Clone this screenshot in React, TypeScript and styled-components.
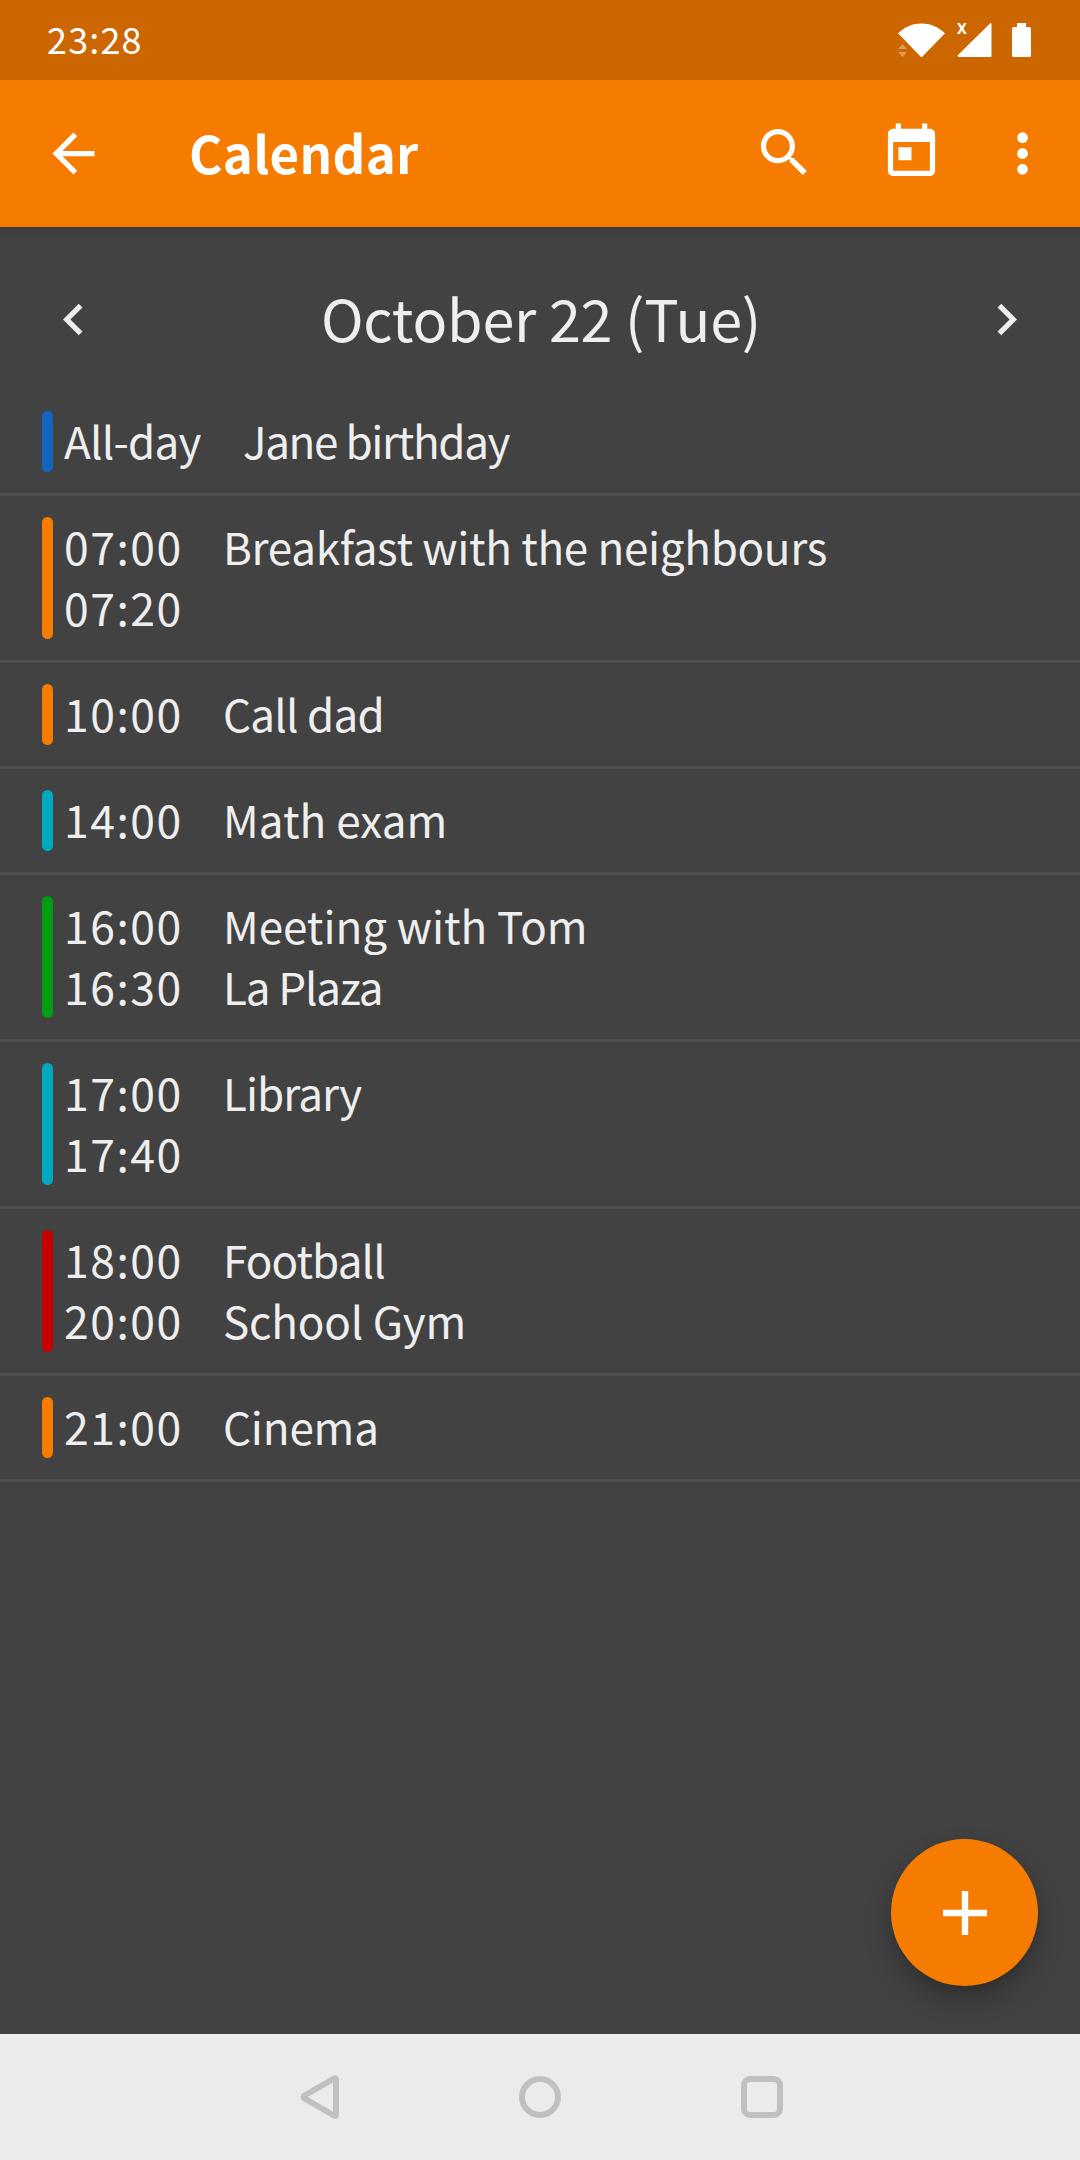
import React from "react";
import styled, { createGlobalStyle } from "styled-components";

const GlobalStyle = createGlobalStyle`
  body {
    margin: 0;
    background: #424242;
    font-family: "Noto Sans CJK SC", "Noto Sans", sans-serif;
    font-weight: 400;
    color: #eeeeee;
  }
`;

const Screen = styled.div`
  position: relative;
  display: flex;
  flex-direction: column;
  width: 1080px;
  height: 2160px;
  overflow: hidden;
  background: #424242;
`;

const StatusBar = styled.div`
  display: flex;
  align-items: center;
  justify-content: space-between;
  flex: none;
  box-sizing: border-box;
  height: 80px;
  padding: 0 49px 0 47px;
  background: #cc6600;
  color: #ffffff;
`;

const Clock = styled.span`
  margin-bottom: 4px;
  font-size: 36px;
  line-height: 48px;
  letter-spacing: 1.15px;
`;

const StatusIcons = styled.div`
  display: flex;
  align-items: center;
`;

const StatusGlyph = styled.svg<{ $before?: number }>`
  display: block;
  margin-left: ${(p) => p.$before ?? 0}px;
  fill: #ffffff;
`;

const Signal = styled.div`
  position: relative;
  margin-left: 12px;
`;

const NoData = styled.span`
  position: absolute;
  left: 0;
  top: -2px;
  font-family: Roboto, sans-serif;
  font-weight: 700;
  font-size: 15.5px;
  line-height: 16px;
`;

const AppBar = styled.header`
  display: flex;
  align-items: center;
  flex: none;
  box-sizing: border-box;
  height: 147px;
  padding: 0 26px 0 42px;
  background: #f57c00;
  color: #ffffff;
`;

const BarShade = styled.div`
  flex: none;
  height: 10px;
  background: linear-gradient(#3b3b3b, #424242);
`;

const Title = styled.h1`
  flex: 1;
  margin: 0 0 3px 84px;
  font-size: 51px;
  font-weight: 700;
  line-height: 70px;
  letter-spacing: 0.3px;
`;

const IconButton = styled.button<{ $before?: number }>`
  flex: none;
  width: 63px;
  height: 63px;
  margin: 0 0 0 ${(p) => p.$before ?? 0}px;
  padding: 0;
  border: 0;
  background: none;
  color: inherit;

  svg {
    display: block;
    width: 63px;
    height: 63px;
    fill: currentColor;
  }
`;

const DayHeader = styled.div`
  display: flex;
  align-items: center;
  justify-content: space-between;
  flex: none;
  box-sizing: border-box;
  height: 153px;
  padding: 11px 42px 0;
`;

const DayTitle = styled.h2`
  margin: 0 0 5px 2px;
  font-size: 57.5px;
  font-weight: 400;
  line-height: 84px;
  letter-spacing: -0.2px;
`;

const EventList = styled.ul`
  flex: 1;
  margin: 0;
  padding: 0;
  list-style: none;
`;

const EventRow = styled.li`
  display: flex;
  padding: 21px 42px;
  border-bottom: 3px solid #505050;
`;

const ColorBar = styled.span<{ $color: string }>`
  flex: none;
  width: 11px;
  margin-right: 11px;
  border-radius: 5.5px;
  background: ${(p) => p.$color};
`;

const Times = styled.div<{ $allDay?: boolean }>`
  flex: none;
  width: ${(p) => (p.$allDay ? 137 : 117)}px;
  margin: ${(p) => (p.$allDay ? "-1px 42px 1px 0" : "-2px 42px 2px 0")};
  white-space: nowrap;
`;

const Details = styled.div`
  margin: -1px 0 1px;
  white-space: nowrap;
`;

const TimeText = styled.div`
  font-size: 44.5px;
  line-height: 61px;
  letter-spacing: 1.5px;
`;

const Label = styled.div<{ $tracking: number }>`
  font-size: 44px;
  line-height: 61px;
  letter-spacing: ${(p) => p.$tracking}px;
`;

const AddButton = styled.button`
  position: absolute;
  right: 42px;
  bottom: 174px;
  display: flex;
  align-items: center;
  justify-content: center;
  width: 147px;
  height: 147px;
  padding: 0;
  border: 0;
  border-radius: 50%;
  background: #f57c00;
  box-shadow: 0 14px 26px rgba(0, 0, 0, 0.25), 0 2px 10px rgba(0, 0, 0, 0.08);
`;

const NavBar = styled.nav`
  display: flex;
  align-items: center;
  justify-content: center;
  gap: 180px;
  flex: none;
  height: 126px;
  background: #ebebeb;

  svg {
    display: block;
    fill: none;
    stroke: #c0c0c0;
    stroke-width: 6;
    stroke-linejoin: round;
  }
`;

const ORANGE = "#f57c00";
const CYAN = "#00a9bf";

type Entry = { text: string; tracking: number };
type CalendarEvent = {
  color: string;
  times?: string[];
  allDay?: boolean;
  details: Entry[];
};

const events: CalendarEvent[] = [
  { color: "#1565c0", allDay: true, details: [{ text: "Jane birthday", tracking: -1.38 }] },
  { color: ORANGE, times: ["07:00", "07:20"], details: [{ text: "Breakfast with the neighbours", tracking: -0.32 }] },
  { color: ORANGE, times: ["10:00"], details: [{ text: "Call dad", tracking: -0.75 }] },
  { color: CYAN, times: ["14:00"], details: [{ text: "Math exam", tracking: 0.05 }] },
  {
    color: "#009c14",
    times: ["16:00", "16:30"],
    details: [
      { text: "Meeting with Tom", tracking: -0.05 },
      { text: "La Plaza", tracking: -1.1 },
    ],
  },
  { color: CYAN, times: ["17:00", "17:40"], details: [{ text: "Library", tracking: -0.97 }] },
  {
    color: "#c80000",
    times: ["18:00", "20:00"],
    details: [
      { text: "Football", tracking: -0.9 },
      { text: "School Gym", tracking: -0.2 },
    ],
  },
  { color: ORANGE, times: ["21:00"], details: [{ text: "Cinema", tracking: -0.2 }] },
];

export default function App() {
  return (
    <>
      <GlobalStyle />
      <Screen>
        <StatusBar>
          <Clock>23:28</Clock>
          <StatusIcons>
            <StatusGlyph width="47" height="34" viewBox="0 0 47 34">
              <path d="M0 10.2C7 3.7 15 .5 23.5 .5S40 3.7 47 10.2L23.5 34.5z" />
              <path d="M0 26l4.5-5L9 26zM0 29h9l-4.5 5z" opacity=".35" />
            </StatusGlyph>
            <Signal>
              <NoData>X</NoData>
              <StatusGlyph width="35" height="34" viewBox="0 0 35 34">
                <path d="M34.5 1v32q0 1-1 1H1.5q-1.5-1-.5-2L33 .5q1.5-1 1.5.5z" />
              </StatusGlyph>
            </Signal>
            <StatusGlyph $before={20} width="19" height="34" viewBox="0 0 19 34">
              <path d="M5 0h9v4h3.5q1.5 0 1.5 1.5v27q0 1.5-1.5 1.5h-16q-1.5 0-1.5-1.5v-27Q0 4 1.5 4H5z" />
            </StatusGlyph>
          </StatusIcons>
        </StatusBar>

        <AppBar>
          <IconButton aria-label="Back">
            <svg viewBox="0 0 24 24">
              <path d="M20 11H7.83l5.59-5.59L12 4l-8 8 8 8 1.41-1.41L7.83 13H20v-2z" />
            </svg>
          </IconButton>
          <Title>Calendar</Title>
          <IconButton aria-label="Search">
            <svg viewBox="0 0.3 24 24">
              <path d="M15.5 14h-.79l-.28-.27C15.41 12.59 16 11.11 16 9.5 16 5.91 13.09 3 9.5 3S3 5.91 3 9.5 5.91 16 9.5 16c1.61 0 3.09-.59 4.23-1.57l.27.28v.79l5 4.99L20.49 19l-4.99-5zm-6 0C7.01 14 5 11.99 5 9.5S7.01 5 9.5 5 14 7.01 14 9.5 11.99 14 9.5 14z" />
            </svg>
          </IconButton>
          <IconButton $before={64} aria-label="Today">
            <svg viewBox="0 0.4 24 24">
              <path d="M19 3h-1V1h-2v2H8V1H6v2H5c-1.11 0-1.99.9-1.99 2L3 19c0 1.1.89 2 2 2h14c1.1 0 2-.9 2-2V5c0-1.1-.9-2-2-2zm0 16H5V8h14v11zM7 10h5v5H7z" />
            </svg>
          </IconButton>
          <IconButton $before={48} aria-label="More options">
            <svg viewBox="0 0 24 24">
              <circle cx="12" cy="6" r="2.05" />
              <circle cx="12" cy="12" r="2.05" />
              <circle cx="12" cy="18" r="2.05" />
            </svg>
          </IconButton>
        </AppBar>
        <BarShade />

        <DayHeader>
          <IconButton aria-label="Previous day">
            <svg viewBox="0 0 24 24">
              <path d="M15.41 7.41L14 6l-6 6 6 6 1.41-1.41L10.83 12z" />
            </svg>
          </IconButton>
          <DayTitle>October 22 (Tue)</DayTitle>
          <IconButton aria-label="Next day">
            <svg viewBox="0 0 24 24">
              <path d="M10 6L8.59 7.41 13.17 12l-4.58 4.59L10 18l6-6z" />
            </svg>
          </IconButton>
        </DayHeader>

        <EventList>
          {events.map((event) => (
            <EventRow key={event.details[0].text}>
              <ColorBar $color={event.color} />
              <Times $allDay={event.allDay}>
                {event.allDay && <Label $tracking={-0.77}>All-day</Label>}
                {event.times?.map((time) => (
                  <TimeText key={time}>{time}</TimeText>
                ))}
              </Times>
              <Details>
                {event.details.map((entry) => (
                  <Label key={entry.text} $tracking={entry.tracking}>
                    {entry.text}
                  </Label>
                ))}
              </Details>
            </EventRow>
          ))}
        </EventList>

        <NavBar>
          <svg width="42" height="44" viewBox="0 0 42 44">
            <path d="M39 4.5v35q0 2-2 1L7.500 23.500q-2-1.500 0-3L37 3.500q2-1 2 1z" />
          </svg>
          <svg width="42" height="42" viewBox="0 0 42 42">
            <circle cx="21" cy="21" r="18" />
          </svg>
          <svg width="42" height="42" viewBox="0 0 42 42">
            <rect x="3" y="3" width="36" height="36" rx="6" />
          </svg>
        </NavBar>

        <AddButton aria-label="New event">
          <svg width="44" height="44" viewBox="0 0 44 44" fill="#ffffff">
            <path d="M18.8 0h6.4v18.8H44v6.4H25.2V44h-6.4V25.2H0v-6.4h18.8z" />
          </svg>
        </AddButton>
      </Screen>
    </>
  );
}
